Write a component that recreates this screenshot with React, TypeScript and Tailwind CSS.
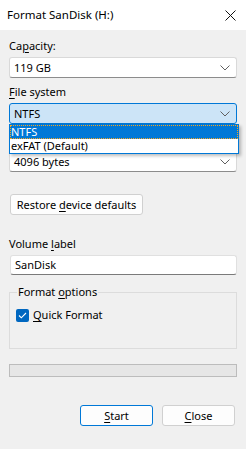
import { FC, ReactNode } from "react";

const Chevron: FC = () => (
  <svg width="10" height="6" viewBox="0 0 10 6" className="shrink-0">
    <path d="M0.5 0.5 L5 5 L9.5 0.5" fill="none" stroke="#606060" strokeWidth="1" />
  </svg>
);

interface IComboProps {
  value: string;
  focused?: boolean;
}

const Combo: FC<IComboProps> = ({ value, focused }) => (
  <div
    className={`flex items-center justify-between h-[21px] pl-[4px] pr-[6px] border rounded-[3px] ${
      focused ? "bg-[#cce4f7] border-[#0078d7]" : "bg-white border-[#d9d9d9] border-b-[#8c8c8c]"
    }`}
  >
    <span>{value}</span>
    <Chevron />
  </div>
);

const U: FC<{ children: ReactNode }> = ({ children }) => <span className="underline underline-offset-2">{children}</span>;

export default function App() {
  return (
    <div
      className="relative w-[246px] h-[449px] bg-[#f0f0f0] text-[11px] leading-[16px] text-black overflow-hidden"
      style={{ fontFamily: '"Noto Sans", sans-serif' }}
    >
      {/* title bar */}
      <div className="flex items-center justify-between h-[30px] bg-white pl-[7px] pr-[10px]">
        <span className="text-[11.5px]">Format SanDisk (H:)</span>
        <svg width="11" height="11" viewBox="0 0 11 11">
          <path d="M0.5 0.5 L10.5 10.5 M10.5 0.5 L0.5 10.5" stroke="#111" strokeWidth="1" />
        </svg>
      </div>

      <div className="px-[9px] flex flex-col">
        <div className="mt-[8px] mb-[3px]">
          Ca<U>p</U>acity:
        </div>
        <Combo value="119 GB" />

        <div className="mt-[6px] mb-[3px]">
          <U>F</U>ile system
        </div>
        <Combo value="NTFS" focused />

        {/* label behind the open list */}
        <div className="h-[27px]" />
        <Combo value="4096 bytes" />

        <div className="mt-[22px] ml-[1px]">
          <button className="h-[21px] w-[133px] bg-[#fdfdfd] border border-[#d0d0d0] rounded-[3px] text-center">
            Restore <U>d</U>evice defaults
          </button>
        </div>

        <div className="mt-[21px] mb-[3px]">
          Volume <U>l</U>abel
        </div>
        <div className="ml-[1px] h-[20px] bg-white border border-[#e0e0e0] border-b-[#7a7a7a] rounded-[3px] pl-[4px] flex items-center">
          SanDisk
        </div>

        <div className="relative mt-[17px] h-[57px] border border-[#dcdcdc]">
          <span className="absolute -top-[9px] left-[7px] px-[1px] bg-[#f0f0f0]">
            Format <U>o</U>ptions
          </span>
          <label className="flex items-center gap-[4px] mt-[14px] ml-[6px]">
            <span className="w-[13px] h-[13px] rounded-[2px] bg-[#0067c0] flex items-center justify-center">
              <svg width="9" height="7" viewBox="0 0 9 7">
                <path d="M1 3.5 L3.3 5.8 L8 1" fill="none" stroke="white" strokeWidth="1.1" />
              </svg>
            </span>
            <span>
              <U>Q</U>uick Format
            </span>
          </label>
        </div>

        <div className="mt-[15px] h-[13px] bg-[#e6e6e6] border border-[#bcbcbc]" />

        <div className="mt-[28px] flex justify-end gap-[9px] pr-[2px]">
          <button className="w-[73px] h-[21px] bg-[#fdfdfd] border border-[#0078d7] rounded-[3px]">
            <U>S</U>tart
          </button>
          <button className="w-[73px] h-[21px] bg-[#fdfdfd] border border-[#d0d0d0] rounded-[3px]">
            <U>C</U>lose
          </button>
        </div>
      </div>

      {/* open dropdown list */}
      <div className="absolute left-[9px] top-[124px] w-[230px] bg-white border border-[#0078d7] shadow-[2px_2px_3px_rgba(0,0,0,0.25)]">
        <div className="h-[14px] leading-[14px] pl-[1px] bg-[#0078d7] text-white outline-1 outline-dotted outline-[#f5a623] -outline-offset-1">
          NTFS
        </div>
        <div className="h-[14px] leading-[14px] pl-[1px]">exFAT (Default)</div>
      </div>
    </div>
  );
}
